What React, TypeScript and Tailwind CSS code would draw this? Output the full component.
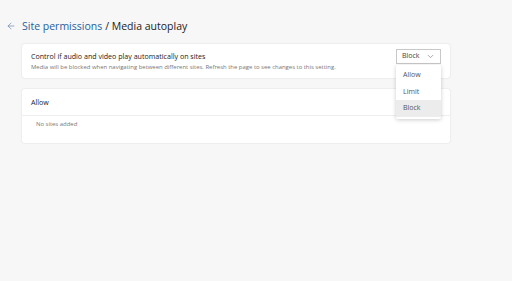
import { ChevronDown, ArrowLeft } from "lucide-react";

const OPTIONS = ["Allow", "Limit", "Block"];

export default function App() {
  const selected = "Block";

  return (
    <div
      className="w-[512px] h-[281px] bg-[#f7f7f7] text-[#1b1b1b] overflow-hidden"
      style={{ fontFamily: '"Open Sans", "Noto Sans", sans-serif' }}
    >
      {/* Header */}
      <div className="flex items-center h-[26px] mt-[13px] pl-[6px]">
        <ArrowLeft className="w-[10px] h-[10px] text-[#5a7fa6] mr-[6px]" strokeWidth={1.5} />
        <span className="text-[10.5px] leading-none text-[#1f5fa0]">Site permissions</span>
        <span className="text-[10.5px] leading-none text-[#222] ml-[3px]">/ Media autoplay</span>
      </div>

      <div className="flex flex-col gap-[11px] ml-[22px] w-[428px] mt-[5px]">
        {/* Autoplay setting */}
        <div className="relative bg-white rounded-[3px] shadow-[0_0_2px_rgba(0,0,0,0.14)] h-[34px] flex items-center pl-[9px] pr-[9px]">
          <div className="flex-1 flex flex-col gap-[2px]">
            <span className="text-[7.1px] leading-[10px] text-[#222]">
              Control if audio and video play automatically on sites
            </span>
            <span className="text-[5.95px] leading-[8px] text-[#777]">
              Media will be blocked when navigating between different sites. Refresh the page to see changes to this setting.
            </span>
          </div>
          <div className="relative self-start mt-[5px]">
            <button className="flex items-center justify-between w-[45px] h-[15px] border border-[#c8c8c8] bg-white px-[5px] text-[7px] text-[#444]">
              <span>{selected}</span>
              <ChevronDown className="w-[9px] h-[9px] text-[#666]" strokeWidth={1.5} />
            </button>
            {/* Open dropdown menu */}
            <div className="absolute left-0 top-[16px] z-10 w-[45px] bg-white rounded-[2px] shadow-[0_1px_4px_rgba(0,0,0,0.2)] py-[2px]">
              {OPTIONS.map((o) => (
                <div
                  key={o}
                  className={`h-[16.5px] flex items-center pl-[7px] text-[7px] text-[#555555] ${
                    o === selected ? "bg-[#ececec]" : ""
                  }`}
                >
                  {o}
                </div>
              ))}
            </div>
          </div>
        </div>

        {/* Allow list */}
        <div className="bg-white rounded-[3px] shadow-[0_0_2px_rgba(0,0,0,0.14)] flex flex-col">
          <div className="h-[27px] flex items-center pl-[9px] text-[7.1px] text-[#222] border-b border-[#eeeeee]">
            Allow
          </div>
          <div className="h-[27px] flex items-start pt-[4px] pl-[14px] text-[5.95px] text-[#777]">
            No sites added
          </div>
        </div>
      </div>
    </div>
  );
}
